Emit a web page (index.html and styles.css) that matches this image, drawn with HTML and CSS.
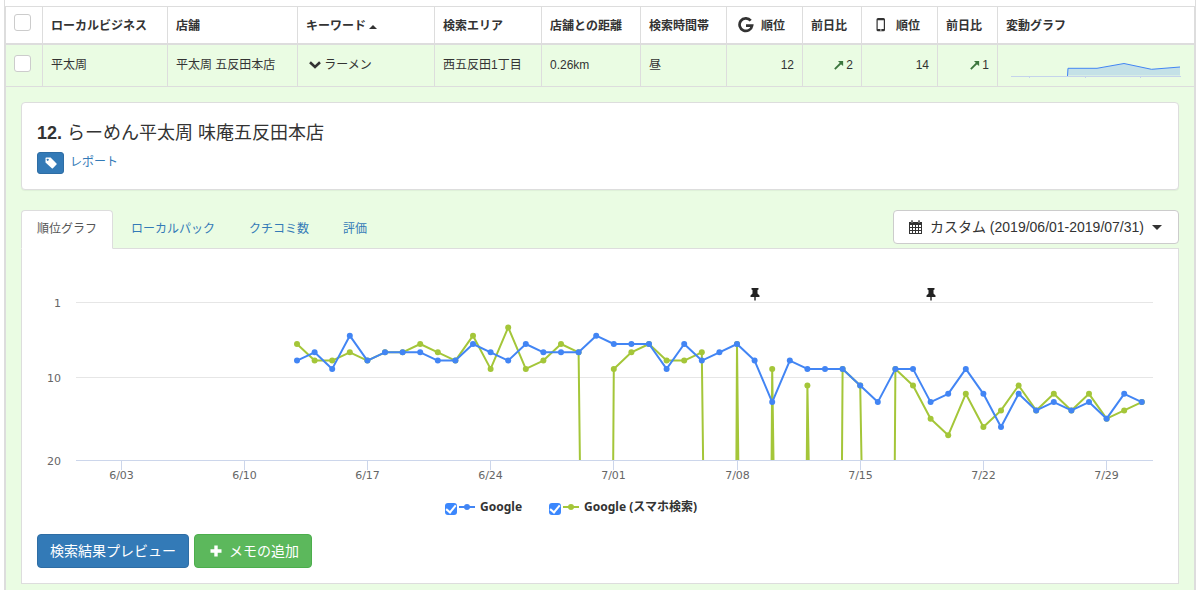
FILE: index.html
```html
<!DOCTYPE html>
<html lang="ja">
<head>
<meta charset="utf-8">
<title>順位グラフ</title>
<link rel="stylesheet" href="styles.css">
</head>
<body>
<div class="wrapper">
<table class="rank-table">
  <colgroup>
    <col class="c-check"><col class="c-biz"><col class="c-shop"><col class="c-key"><col class="c-area"><col class="c-dist">
    <col class="c-time"><col class="c-rank"><col class="c-diff"><col class="c-rank"><col class="c-diff2"><col>
  </colgroup>
  <thead>
    <tr>
      <th><input class="pick" type="checkbox" aria-label="すべて選択"></th>
      <th>ローカルビジネス</th>
      <th>店舗</th>
      <th>キーワード <span class="caret up"></span></th>
      <th>検索エリア</th>
      <th>店舗との距離</th>
      <th>検索時間帯</th>
      <th><span class="rank-head"><svg class="g-icon" width="16" height="16" viewBox="0 0 16 16"><path d="M12.700 3.600A6.300 6.300 0 1 0 14.100 8.600H8" fill="none" stroke="#333" stroke-width="2.700"/></svg>順位</span></th>
      <th>前日比</th>
      <th><span class="rank-head"><svg class="phone-icon" width="16" height="16" viewBox="0 0 16 16"><path fill="#333" fill-rule="evenodd" d="M5 1h5.500A1.500 1.500 0 0 1 12 2.500v10.300a1.500 1.500 0 0 1-1.500 1.500h-5.500A1.500 1.500 0 0 1 3.500 12.800v-10.300A1.500 1.500 0 0 1 5 1zM4.700 3.200v8.800h6.100V3.200zM7 12.500v1h1.600v-1z"/></svg>順位</span></th>
      <th>前日比</th>
      <th>変動グラフ</th>
    </tr>
  </thead>
  <tbody>
    <tr class="selected">
      <td><input class="pick" type="checkbox" aria-label="平太周を選択"></td>
      <td>平太周</td>
      <td>平太周 五反田本店</td>
      <td class="keyword"><svg width="12" height="8" viewBox="0 0 12 8"><path d="M1 1.300l5 4.700 5-4.700" fill="none" stroke="#333" stroke-width="2.600"/></svg> ラーメン</td>
      <td>西五反田1丁目</td>
      <td>0.26km</td>
      <td>昼</td>
      <td class="num">12</td>
      <td class="num"><svg width="10" height="10" viewBox="0 0 10 10"><path d="M.8 9.200L7 3" stroke="#3c763d" stroke-width="1.800"/><path d="M4 .9H9.100V6L7.300 4.400 5.700 2.800z" fill="#3c763d"/></svg> 2</td>
      <td class="num">14</td>
      <td class="num"><svg width="10" height="10" viewBox="0 0 10 10"><path d="M.8 9.200L7 3" stroke="#3c763d" stroke-width="1.800"/><path d="M4 .9H9.100V6L7.300 4.400 5.700 2.800z" fill="#3c763d"/></svg> 1</td>
      <td class="spark"><svg viewBox="0 0 180 30" role="img" aria-label="変動グラフ">
        <path d="M61.500 25.500V18.500H91L118 13.500 145.500 19.300 174 17V25.500z" fill="#4285f4" fill-opacity=".22"/>
        <path d="M5 26.500H175M23.500 26v2M79.500 26v2M134.500 26v2" stroke="#c5d3ec" fill="none"/>
        <path d="M61.500 26L62 18.300H91L118 13.500 145.500 19.300 174 17" fill="none" stroke="#4285f4"/>
      </svg></td>
    </tr>
    <tr class="selected">
      <td class="detail" colspan="12">
        <section class="card">
          <h2><strong>12.</strong> らーめん平太周 味庵五反田本店</h2>
          <div class="report">
            <button class="tag" type="button" aria-label="タグ"><svg width="12" height="12" viewBox="0 0 12 12"><path fill="#fff" fill-rule="evenodd" d="M1 .5h4.600L11.500 6.400a.8.8 0 0 1 0 1.100l-3.600 3.800a.8.8 0 0 1-1.100 0L.5 5.500V1zM2.700 1.800a1 1 0 1 0 .01 0z"/></svg></button>
            <a href="#">レポート</a>
          </div>
        </section>
        <div class="tabbar">
          <nav class="tabs">
            <a class="active" href="#">順位グラフ</a><a href="#">ローカルパック</a><a href="#">クチコミ数</a><a href="#">評価</a>
          </nav>
          <button class="btn period" type="button"><svg width="13" height="14" viewBox="0 0 13 14"><path fill="#333" fill-rule="evenodd" d="M0 2h2V.5h2V2h5V.5h2V2h2v12H0zM1 5v2h2V5zM4 5v2h2V5zM7 5v2h2V5zM10 5v2h2V5zM1 8v2h2V8zM4 8v2h2V8zM7 8v2h2V8zM10 8v2h2V8zM1 11v2h2v-2zM4 11v2h2v-2zM7 11v2h2v-2zM10 11v2h2v-2zM2.700 1v2h.6V1zM9.700 1v2h.6V1z"/></svg><span>カスタム (2019/06/01-2019/07/31)</span><span class="caret"></span></button>
        </div>
        <section class="panel">
          <svg class="chart" id="chart" viewBox="0 0 1126 226" role="img" aria-label="順位グラフ"></svg>
          <div class="legend">
            <label><input type="checkbox" checked><svg width="16" height="6" viewBox="0 0 16 6"><path d="M0 3h16" stroke="#4285f4" stroke-width="2"/><circle cx="8" cy="3" r="3" fill="#4285f4"/></svg><span>Google</span></label>
            <label><input type="checkbox" checked><svg width="16" height="6" viewBox="0 0 16 6"><path d="M0 3h16" stroke="#a4c639" stroke-width="2"/><circle cx="8" cy="3" r="3" fill="#a4c639"/></svg><span>Google (スマホ検索)</span></label>
          </div>
          <div class="actions">
            <button class="btn primary" type="button">検索結果プレビュー</button>
            <button class="btn success" type="button"><svg width="12" height="12" viewBox="0 0 12 12"><path d="M6 .5v11M.5 6h11" stroke="#fff" stroke-width="3.400"/></svg>メモの追加</button>
          </div>
        </section>
      </td>
    </tr>
  </tbody>
</table>
</div>
<script src="chart.js"></script>
</body>
</html>
```

FILE: chart.js
```js
// Daily ranks from 6/13 to 7/31; null means out of range.
var google = [8,7,9,5,8,7,7,7,8,8,6,7,8,6,7,7,7,5,6,6,6,9,6,8,7,6,8,13,8,9,9,9,11,13,9,9,13,12,9,12,16,12,14,13,14,13,15,12,13];
var mobile = [6,8,8,7,8,7,7,6,7,8,5,9,4,9,8,6,7,null,9,7,6,8,8,7,null,6,null,9,null,11,null,9,11,null,9,11,15,17,12,16,14,11,14,12,14,12,15,14,13];
var ticks = ['6/03','6/10','6/17','6/24','7/01','7/08','7/15','7/22','7/29'];
var BLUE = '#4285f4', GREEN = '#a4c639', FLOOR = 196;

function px(i) { return +(260 + i * 17.6).toFixed(1); }
function py(rank) { return +(38.5 + (rank - 1) * 8.3).toFixed(1); }

// Out-of-range days pull the line straight down to the axis.
function linePath(data) {
  var d = '', open = false;
  data.forEach(function (v, i) {
    if (v === null) {
      if (open) d += 'L' + (px(i - 1) + 1.3) + ' ' + FLOOR;
      open = false;
      return;
    }
    if (!open && i > 0) d += 'M' + (px(i) - 0.6) + ' ' + FLOOR + 'L' + px(i) + ' ' + py(v);
    else d += (open ? 'L' : 'M') + px(i) + ' ' + py(v);
    open = true;
  });
  return d;
}

function series(data, color) {
  var out = '<path d="' + linePath(data) + '" fill="none" stroke="' + color + '" stroke-width="2" stroke-linejoin="round"/>';
  data.forEach(function (v, i) {
    if (v !== null) out += '<circle cx="' + px(i) + '" cy="' + py(v) + '" r="3" fill="' + color + '"/>';
  });
  return out;
}

function pin(x) {
  return '<path transform="translate(' + x + ' 24)" d="M-3.500 0H3.500V1.500L2.500 2V5.500L4.500 7.500V9H.7V12.500H-.7V9H-4.500V7.500L-2.500 5.500V2L-3.500 1.500z" fill="#222"/>';
}

var html = '<path d="M39 38.5H1116M39 113.5H1116" stroke="#e6e6e6"/>';
html += series(mobile, GREEN) + '<path d="M39 196.5H1116" stroke="#ccd6eb"/>' + series(google, BLUE);
[[1, 43], [10, 118], [20, 201]].forEach(function (l) {
  html += '<text class="y-label" x="24" y="' + l[1] + '">' + l[0] + '</text>';
});
ticks.forEach(function (t, i) {
  var x = Math.floor(84.5 + i * 123.1) + 0.5;
  html += '<path d="M' + x + ' 197v9" stroke="#ccd6eb"/><text class="x-label" x="' + x + '" y="215">' + t + '</text>';
});
html += pin(718) + pin(894);
document.getElementById('chart').innerHTML = html;
```

FILE: styles.css
```css
* { box-sizing: border-box; }
html { scrollbar-width: none; }
body {
  margin: 0;
  font: 12px/17px "Liberation Sans", "Noto Sans CJK JP", sans-serif;
  color: #333;
  background: #fff;
}
button { font: inherit; cursor: pointer; }
a { color: #337ab7; text-decoration: none; }
svg { display: inline-block; }

.wrapper {
  margin: 0 5px 0 4px;
  padding-top: 6px;
  border: solid #ddd;
  border-width: 0 1px;
}

.rank-table { width: 100%; table-layout: fixed; border-collapse: collapse; }
.c-check { width: 37px; }
.c-biz { width: 125px; }
.c-shop { width: 130px; }
.c-key { width: 137px; }
.c-area { width: 107px; }
.c-dist { width: 99px; }
.c-time { width: 86px; }
.c-rank { width: 76px; }
.c-diff { width: 59px; }
.c-diff2 { width: 60px; }

th, td { border: 1px solid #ddd; padding: 0 8px; text-align: left; white-space: nowrap; }
th { height: 37px; padding-top: 4px; border-bottom-width: 2px; font-weight: bold; }
td { height: 43px; }
.selected { background: #eafce3; }
.num { text-align: right; }
.keyword { padding-left: 11px; }
.keyword svg { vertical-align: 0; }
.num svg { vertical-align: -1px; margin-right: -1px; }
.rank-head { display: flex; align-items: center; gap: 7px; padding-left: 3px; }
.rank-head svg { margin-bottom: 4px; }

.pick {
  appearance: none;
  display: block;
  width: 17px;
  height: 17px;
  margin: 0 0 4px;
  border: 1px solid #ccc;
  border-radius: 3px;
  background: #fff;
}
th .pick { margin-bottom: 8px; }
.pick:checked { background: #3b87fd; }
.rank-table .spark { padding: 0; }
.spark svg { display: block; width: calc(100% - 16px); margin: 0 8px; }

.caret {
  display: inline-block;
  border: solid transparent;
  border-width: 5px 5px 0;
  border-top-color: #333;
}
.caret.up { border-width: 0 4px 4px; border-bottom-color: #333; vertical-align: 1px; }

.rank-table .detail { height: auto; padding: 15px 15px 6px; border-bottom: 0; vertical-align: top; }

.card {
  margin-bottom: 20px;
  padding: 20px 15px 15px;
  background: #fff;
  border: 1px solid #ddd;
  border-radius: 4px;
  box-shadow: 0 1px 1px rgba(0, 0, 0, .05);
}
.card h2 { margin: 0 0 9px; font-size: 18px; line-height: 20px; font-weight: normal; }
.report { display: flex; gap: 6px; height: 22px; line-height: 20px; }
.tag {
  display: flex;
  align-items: center;
  justify-content: center;
  width: 27px;
  height: 22px;
  padding: 0;
  background: #337ab7;
  border: 1px solid #2e6da4;
  border-radius: 3px;
}

.tabbar { display: flex; justify-content: space-between; align-items: flex-start; }
.tabs { display: flex; gap: 2px; margin-bottom: -1px; }
.tabs a { padding: 10px 15px; border: 1px solid transparent; border-radius: 4px 4px 0 0; }
.tabs .active { position: relative; color: #555; background: #fff; border-color: #ddd; border-bottom-color: #fff; }

.btn {
  display: flex;
  align-items: center;
  height: 34px;
  padding: 0 12px;
  border: 1px solid #ccc;
  border-radius: 4px;
  font-size: 14px;
  line-height: 20px;
  white-space: nowrap;
}
.period { gap: 8px; padding: 0 16px 0 15px; color: #333; background: #fff; }
.primary { color: #fff; background: #337ab7; border-color: #2e6da4; }
.success { gap: 7px; padding-left: 15px; color: #fff; background: #5cb85c; border-color: #4cae4c; }

.panel { padding: 15px; background: #fff; border: 1px solid #ddd; }
.chart { display: block; width: 100%; font: 11px "DejaVu Sans", sans-serif; }
.chart text { fill: #666; }
.y-label { text-anchor: end; }
.x-label { text-anchor: middle; }

.legend {
  display: flex;
  justify-content: center;
  gap: 27px;
  margin: 8px 0 18px;
  padding-right: 58px;
  font: bold 12px/18px "Noto Sans", "Noto Sans CJK JP", sans-serif;
}
.legend label { display: flex; align-items: center; }
.legend svg { margin: 0 5px 0 2px; }
.legend input {
  appearance: none;
  display: grid;
  place-items: center;
  width: 12px;
  height: 12px;
  margin: 4px 0 0;
  border-radius: 3px;
  background: #ccc;
}
.legend input:checked { background: #3b87fd; }
.legend input:checked::after {
  content: "";
  width: 4px;
  height: 8px;
  margin-bottom: 2px;
  border: solid #fff;
  border-width: 0 2px 2px 0;
  transform: rotate(40deg);
}
.actions { display: flex; gap: 5px; }
```
